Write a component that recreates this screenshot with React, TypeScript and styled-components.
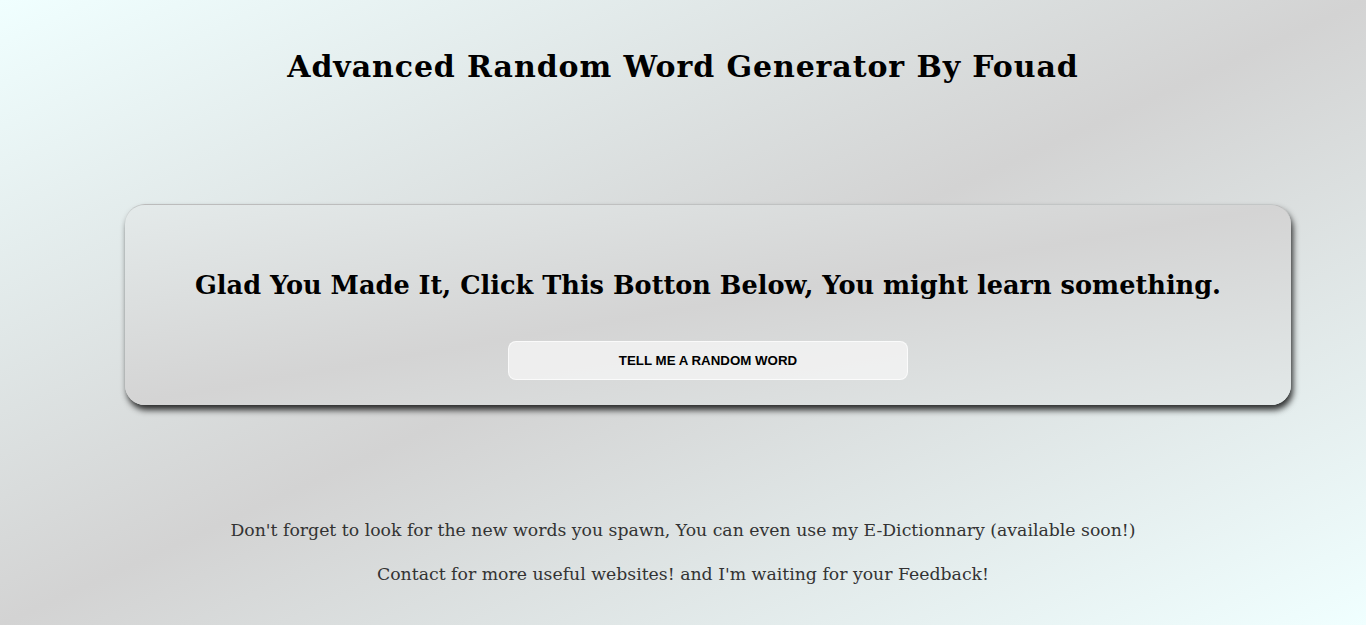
import React from "react";
import styled, { createGlobalStyle } from "styled-components";

const Global = createGlobalStyle`
  html, body { margin: 0; padding: 0; }
  body {
    font-family: "DejaVu Serif", Georgia, serif;
  }
`;

const Page = styled.div`
  box-sizing: border-box;
  min-height: 625px;
  width: 100%;
  padding-top: 47px;
  background: linear-gradient(to bottom right, #f0ffff 0%, #d3d3d3 50%, #f0ffff 100%);
  display: flex;
  flex-direction: column;
  align-items: stretch;
`;

const Title = styled.h1`
  margin: 0;
  text-align: center;
  font-family: "DejaVu Serif", Georgia, serif;
  font-weight: bold;
  font-size: 30px;
  line-height: 40px;
  letter-spacing: 0.9px;
  color: #000;
`;

const Card = styled.section`
  box-sizing: border-box;
  margin: 117px 0 0 125px;
  width: 1166px;
  height: 201px;
  border-radius: 20px;
  border-top: 1px solid rgba(150, 150, 150, 0.4);
  padding-top: 62px;
  display: flex;
  flex-direction: column;
  align-items: center;
  background: linear-gradient(to bottom right, #e4eaea 0%, #d4d4d4 50%, #e2e8e8 100%);
  box-shadow: 2px 5px 6px rgba(0, 0, 0, 0.8);
`;

const Heading = styled.h2`
  margin: 0;
  font-family: "DejaVu Serif", Georgia, serif;
  font-weight: bold;
  font-size: 25.6px;
  line-height: 36px;
  color: #000;
  text-align: center;
`;

const Button = styled.button`
  box-sizing: border-box;
  margin-top: 38px;
  width: 400px;
  height: 39px;
  border-radius: 8px;
  border: 1px solid rgba(255, 255, 255, 0.7);
  background: rgba(245, 245, 245, 0.75);
  font-family: "Liberation Sans", Arial, sans-serif;
  font-weight: bold;
  font-size: 13.3px;
  color: #000;
  cursor: pointer;
`;

const Footer = styled.footer`
  margin-top: 113px;
  display: flex;
  flex-direction: column;
  align-items: center;
  gap: 20px;
`;

const Note = styled.p`
  margin: 0;
  font-family: "DejaVu Serif", Georgia, serif;
  font-size: 17.3px;
  line-height: 24px;
  color: #333;
  text-align: center;
`;

export default function App() {
  return (
    <>
      <Global />
      <Page>
        <Title>Advanced Random Word Generator By Fouad</Title>
        <Card>
          <Heading>Glad You Made It, Click This Botton Below, You might learn something.</Heading>
          <Button>TELL ME A RANDOM WORD</Button>
        </Card>
        <Footer>
          <Note>Don't forget to look for the new words you spawn, You can even use my E-Dictionnary (available soon!)</Note>
          <Note>Contact for more useful websites! and I'm waiting for your Feedback!</Note>
        </Footer>
      </Page>
    </>
  );
}
